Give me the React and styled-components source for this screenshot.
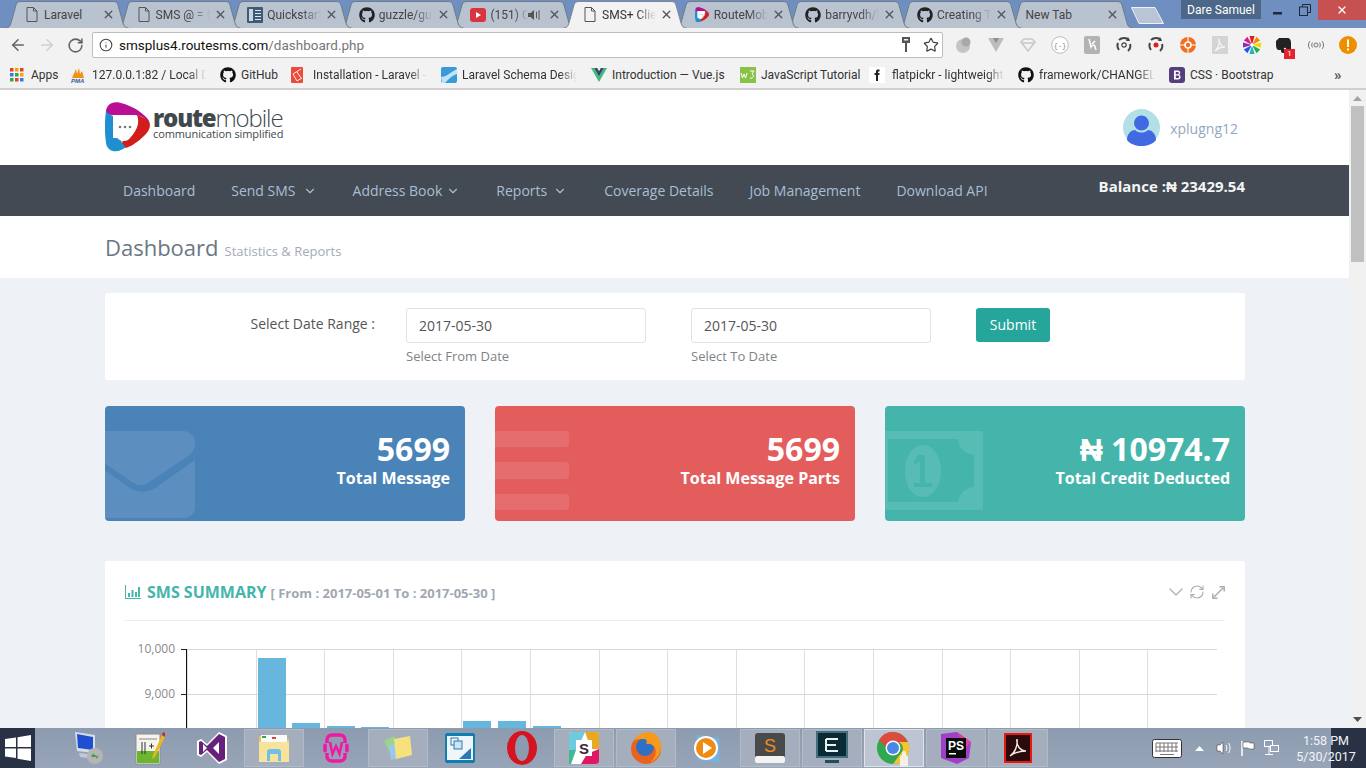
import styled, { createGlobalStyle } from "styled-components";
import { ChevronDown, RefreshCw, ArrowLeft, ArrowRight, RotateCw, Star, Info, X } from "lucide-react";
import { FaGithub } from "react-icons/fa";

const Global = createGlobalStyle`
  html, body { margin: 0; padding: 0; overflow: hidden; background: #eef1f6; }
  * { box-sizing: border-box; }
`;

const Screen = styled.div`
  width: 1366px;
  height: 768px;
  display: flex;
  flex-direction: column;
  overflow: hidden;
  font-family: "Open Sans", sans-serif;
`;

// browser chrome
const Chrome = styled.div`
  height: 90px;
  flex: none;
  display: flex;
  flex-direction: column;
  font-family: Roboto, sans-serif;
  font-size: 12px;
  color: #333;
`;

const TabStrip = styled.div`
  height: 28px;
  flex: none;
  background: #6e8fbf;
  display: flex;
  padding: 1px 0 0 5px;
  position: relative;
`;

const Tab = styled.div`
  position: relative;
  flex: none;
  width: 124px;
  height: 27px;
  margin-right: -12.4px;
  z-index: ${(p) => p.$z};
  & > svg.shape {
    position: absolute;
    inset: 0;
  }
`;

const TabBody = styled.div`
  position: relative;
  height: 100%;
  display: flex;
  align-items: center;
  padding-left: ${(p) => p.$pad}px;
  color: ${(p) => (p.$active ? "#333" : "#444")};
`;

const TabIcon = styled.span`
  width: 16px;
  height: 16px;
  flex: none;
  display: flex;
  align-items: center;
  justify-content: center;
  margin-right: 4px;
`;

const TabTitle = styled.span`
  width: ${(p) => p.$w}px;
  flex: none;
  white-space: nowrap;
  overflow: hidden;
  font-size: 12px;
  -webkit-mask-image: ${(p) => (p.$plain ? "none" : "linear-gradient(to right, #000 65%, transparent)")};
  mask-image: ${(p) => (p.$plain ? "none" : "linear-gradient(to right, #000 65%, transparent)")};
`;

const TabClose = styled.span`
  position: absolute;
  left: 97px;
  top: 7px;
  display: flex;
  color: #55595f;
`;

const NewTab = styled.svg`
  flex: none;
  margin: 6px 0 0 10px;
`;

const WindowButtons = styled.div`
  position: absolute;
  top: 0;
  right: 0;
  display: flex;
  align-items: flex-start;
`;

const UserBadge = styled.div`
  width: 80px;
  height: 19px;
  background: #4d6788;
  color: #fff;
  font-size: 12px;
  display: flex;
  align-items: center;
  justify-content: center;
  margin-right: 3px;
`;

const WinButton = styled.div`
  width: ${(p) => p.$w}px;
  height: 20px;
  display: flex;
  align-items: center;
  justify-content: center;
  background: ${(p) => p.$bg || "transparent"};
`;

const Toolbar = styled.div`
  height: 34px;
  flex: none;
  background: #f2f2f2;
  display: flex;
  align-items: center;
  padding-left: 3px;
`;

const NavIcon = styled.span`
  width: 29px;
  display: flex;
  justify-content: center;
  color: ${(p) => p.$c};
`;

const AddressBar = styled.div`
  width: 851px;
  height: 26px;
  margin-left: 2px;
  background: #fff;
  border: 1px solid #bdbdbd;
  border-radius: 2px;
  display: flex;
  align-items: center;
  padding: 0 3px 0 6px;
  font-size: 13.5px;
  flex: none;
`;

const Url = styled.span`
  margin-left: 6px;
  flex: 1;
  color: #111;
  & em {
    font-style: normal;
    color: #777;
  }
`;

const StarIcon = styled(Star)`
  margin-left: 12px;
`;

const Extensions = styled.div`
  display: flex;
  margin-left: 5px;
`;

const Ext = styled.span`
  width: 32px;
  height: 18px;
  display: flex;
  align-items: center;
  justify-content: center;
  position: relative;
`;

const ExtBadge = styled.span`
  position: absolute;
  right: 5px;
  bottom: -5px;
  width: 11px;
  height: 10px;
  background: #e8202a;
  color: #fff;
  font-size: 8px;
  line-height: 10px;
  text-align: center;
`;

const Bookmarks = styled.div`
  height: 28px;
  flex: none;
  background: #f2f2f2;
  border-bottom: 2px solid #d0d0d0;
  display: flex;
  align-items: center;
  padding: 0 0 0 10px;
  position: relative;
`;

const Bookmark = styled.div`
  width: ${(p) => p.$w}px;
  flex: none;
  display: flex;
  align-items: center;
  gap: ${(p) => p.$gap || 5}px;
  padding-right: ${(p) => (p.$fade ? 14 : 0)}px;
  white-space: nowrap;
  & > svg {
    flex: none;
  }
`;

const BookmarkLabel = styled.span`
  overflow: hidden;
  flex: 1;
  -webkit-mask-image: ${(p) => (p.$fade ? "linear-gradient(to right, #000 85%, transparent)" : "none")};
  mask-image: ${(p) => (p.$fade ? "linear-gradient(to right, #000 85%, transparent)" : "none")};
`;

const More = styled.span`
  position: absolute;
  left: 1334px;
  top: 4px;
  font-size: 15px;
  font-weight: 700;
  color: #555;
`;

// page
const Viewport = styled.div`
  flex: 1;
  min-height: 0;
  display: flex;
`;

const Page = styled.div`
  flex: 1;
  min-width: 0;
  background: #eef1f6;
  overflow: hidden;
`;

const Scrollbar = styled.div`
  width: 17px;
  flex: none;
  background: #f1f1f1;
  display: flex;
  flex-direction: column;
  align-items: center;
`;

const ScrollArrow = styled.svg`
  flex: none;
  margin: 6px 0;
`;

const ScrollThumb = styled.div`
  width: 13px;
  height: 156px;
  margin-top: -1px;
  background: #c1c1c1;
`;

const ScrollTrack = styled.div`
  flex: 1;
`;

const Wrap = styled.div`
  width: 1140px;
  margin-left: 105px;
`;

const Header = styled.div`
  height: 75px;
  background: #fff;
`;

const HeaderRow = styled(Wrap)`
  height: 100%;
  display: flex;
  align-items: center;
  justify-content: space-between;
  padding-right: 7px;
`;

const Brand = styled.div`
  display: flex;
  align-items: center;
  gap: 3px;
  margin-top: -1px;
`;

const BrandText = styled.div`
  display: flex;
  flex-direction: column;
  color: #40484c;
  margin-top: -6px;
`;

const BrandName = styled.div`
  font-size: 24px;
  line-height: 19px;
  font-weight: 300;
  letter-spacing: -1.1px;
  & b {
    font-weight: 800;
    letter-spacing: -1.2px;
  }
`;

const BrandTag = styled.div`
  font-size: 11px;
  line-height: 13px;
  letter-spacing: -0.1px;
  white-space: nowrap;
`;

const User = styled.div`
  display: flex;
  align-items: center;
  gap: 10px;
  font-size: 14px;
  color: #93a8c2;
  & span {
    margin-top: 2px;
  }
`;

const NavBar = styled.div`
  height: 51px;
  background: #434a54;
`;

const NavRow = styled(Wrap)`
  height: 100%;
  display: flex;
  align-items: center;
  justify-content: space-between;
`;

const NavList = styled.div`
  display: flex;
  align-items: center;
  gap: 36px;
  padding-left: 18px;
`;

const NavItem = styled.div`
  display: flex;
  align-items: center;
  gap: ${(p) => p.$gap || 0}px;
  font-size: 14px;
  color: #a9bed3;
  white-space: nowrap;
  & svg {
    margin-right: ${(p) => p.$after || 0}px;
  }
`;

const Balance = styled.div`
  font-size: 15px;
  font-weight: 700;
  color: #f2f4f6;
  margin-top: -9px;
  white-space: nowrap;
`;

const TitleBar = styled.div`
  height: 62px;
  background: #fff;
`;

const TitleRow = styled(Wrap)`
  height: 100%;
  display: flex;
  align-items: baseline;
  gap: 6px;
  padding-top: 16px;
`;

const PageTitle = styled.div`
  font-size: 22px;
  color: #6b7785;
`;

const PageSub = styled.div`
  font-size: 13px;
  color: #a3abb5;
`;

const Content = styled(Wrap)`
  padding-top: 15px;
`;

const DateCard = styled.div`
  height: 87px;
  background: #fff;
  border-radius: 3px;
  display: flex;
  align-items: flex-start;
  padding-top: 15px;
`;

const DateLabel = styled.div`
  width: 270px;
  margin-right: 31px;
  text-align: right;
  font-size: 14px;
  color: #555;
  padding-top: 6px;
`;

const Field = styled.div`
  width: 240px;
  margin-right: 45px;
`;

const DateInput = styled.div`
  height: 35px;
  border: 1px solid #dfe3e8;
  border-radius: 3px;
  padding: 0 12px;
  display: flex;
  align-items: center;
  font-size: 14px;
  color: #555;
`;

const Hint = styled.div`
  margin-top: 4px;
  font-size: 13px;
  color: #7d8388;
`;

const Submit = styled.div`
  width: 74px;
  height: 34px;
  background: #26a69a;
  border-radius: 3px;
  color: #fff;
  font-size: 14px;
  font-weight: 500;
  padding-bottom: 2px;
  display: flex;
  align-items: center;
  justify-content: center;
`;

const Stats = styled.div`
  display: grid;
  grid-template-columns: repeat(3, 360px);
  gap: 30px;
  margin-top: 26px;
`;

const StatCard = styled.div`
  position: relative;
  height: 115px;
  border-radius: 4px;
  overflow: hidden;
  background: ${(p) => p.$bg};
  color: #fff;
  text-align: right;
  padding: 23px 15px 0 0;
  & > svg {
    position: absolute;
    left: 0;
    top: 25px;
  }
`;

const StatValue = styled.div`
  font-size: 32px;
  line-height: 40px;
  font-weight: 700;
  position: relative;
`;

const StatLabel = styled.div`
  font-size: 16px;
  line-height: 22px;
  font-weight: 700;
  position: relative;
  margin-top: -2px;
`;

const ChartCard = styled.div`
  margin-top: 40px;
  background: #fff;
  border-radius: 3px;
  padding: 0 20px;
  height: 400px;
`;

const ChartHead = styled.div`
  height: 60px;
  border-bottom: 1px solid #eeeeee;
  display: flex;
  align-items: center;
  padding-top: 2px;
`;

const ChartTitle = styled.div`
  display: flex;
  align-items: baseline;
  margin-left: 6px;
  font-size: 16px;
  font-weight: 700;
  color: #45b5ab;
  flex: 1;
  & small {
    font-size: 13px;
    color: #a0a8b2;
    margin-left: 4px;
  }
`;

const ChartTools = styled.div`
  display: flex;
  align-items: center;
  gap: 1px;
  color: #aeaeae;
  margin-top: 1px;
`;

const ExpandIcon = styled.svg`
  margin-left: 6px;
`;

const ChartSvg = styled.svg`
  display: block;
  margin: 27px 0 0 -20px;
  overflow: visible;
`;

// windows taskbar
const Taskbar = styled.div`
  height: 40px;
  flex: none;
  display: flex;
  background: linear-gradient(#8d9bb0, #98a5b8);
  position: relative;
  font-family: Roboto, sans-serif;
`;

const StartButton = styled.div`
  width: 35px;
  margin-right: 23px;
  background: #283244;
  display: flex;
  align-items: center;
  justify-content: center;
  flex: none;
`;

const TaskList = styled.div`
  display: flex;
  gap: 2px;
  padding-top: 1px;
`;

const TaskItem = styled.div`
  width: 60px;
  height: 38px;
  display: flex;
  align-items: center;
  justify-content: center;
  border: 1px solid ${(p) => (p.$active ? "#dfe4ea" : p.$open ? "#b2bbc8" : "transparent")};
  background: ${(p) => (p.$active ? "#bcc5d1" : p.$open ? "#a4aebd" : "transparent")};
`;

const Tray = styled.div`
  margin-left: auto;
  display: flex;
  align-items: center;
  color: #fff;
`;

const TrayIcon = styled.span`
  display: flex;
  width: ${(p) => p.$w}px;
  justify-content: center;
`;

const Clock = styled.div`
  width: 80px;
  height: 100%;
  margin-left: 6px;
  padding-top: 2px;
  background: linear-gradient(to right, transparent 45px, #283244 45px);
  font-size: 12.5px;
  line-height: 16px;
  text-align: center;
  display: flex;
  flex-direction: column;
  justify-content: center;
  color: #f2f4f7;
`;

/* icons */
const Doc = () => (
  <svg width="12" height="15" viewBox="0 0 12 15" fill="none" stroke="#555" strokeWidth="1">
    <path d="M1 .5h6.500L11 4v10.500H1zM7.500 .5V4H11" />
  </svg>
);
const Book = () => (
  <svg width="16" height="16" viewBox="0 0 16 16">
    <rect width="16" height="16" rx="1" fill="#3f5a73" />
    <rect x="2" y="2" width="4" height="12" fill="#c9d4de" />
    <path d="M8 3h6v1H8zM8 6h6v1H8zM8 9h6v1H8zM8 12h6v1H8z" fill="#dfe6ec" />
  </svg>
);
const Yt = () => (
  <svg width="16" height="14" viewBox="0 0 16 14">
    <rect width="16" height="14" y="0" rx="3" fill="#d9343f" />
    <path d="M6 4l5 3-5 3z" fill="#fff" />
  </svg>
);
const Speaker = () => (
  <svg width="13" height="12" viewBox="0 0 13 12" fill="#555">
    <path d="M0 4h2.500L6 1v10L2.500 8H0zM8 3l1-.5v7L8 9zM10.500 1.500l1-.5v10l-1-.5z" />
  </svg>
);
const LogoMark = ({ size = 45 }) => (
  <svg width={size} height={size * 1.11} viewBox="0 0 45 50">
    <path d="M1 12C0 4 6-1 14 .5 24 2.500 36 9 42 16c2 2 3 5 3 7-3-6-9-10-16-10H10C6 13 3 13 1 12z" fill="#b80f95" />
    <path d="M1 9C-.5 19-.5 31 1 41c1 8 9 10 15 7 4-2 8-4 11-7-4 1-8 0-11-2l-4-3H8V14c-2-1-5-2-7-5z" fill="#1f8fcf" />
    <path d="M45 23c0 4-2 7-6 11-5 5-12 10-18 12l-6-8c4 2 8 1 10-2 4-4 7-9 8-14 .5-3 0-6-1-9 6 2 12 5 13 10z" fill="#d21d1b" />
    <path d="M12 13h16c3 0 5 2 4 6l-5 10-8 7-2 5-2-5h-2c-3 0-5-2-5-5V18c0-3 1-5 4-5z" fill="#fff" />
    <circle cx="15" cy="25" r="1.300" fill="#777" />
    <circle cx="20" cy="25" r="1.300" fill="#777" />
    <circle cx="25" cy="25" r="1.300" fill="#777" />
  </svg>
);
const Apps = () => (
  <svg width="14" height="14" viewBox="0 0 14 14">
    {["#e0452c", "#f2a500", "#e0452c", "#3b78e7", "#2fa84f", "#f2a500", "#2fa84f", "#e0452c", "#3b78e7"].map((c, i) => (
      <rect key={i} x={(i % 3) * 5} y={Math.floor(i / 3) * 5} width="3.500" height="3.500" fill={c} />
    ))}
  </svg>
);
const Pma = () => (
  <svg width="16" height="16" viewBox="0 0 16 16">
    <path d="M2 11L6 2l1 5 2-6 1 6 2-3 2 7z" fill="#f29111" />
    <text x="1" y="15.500" fontSize="6" fontStyle="italic" fontWeight="700" fontFamily="Liberation Sans" fill="#3b5b93">PMA</text>
  </svg>
);
const LaravelMark = () => (
  <svg width="12" height="16" viewBox="0 0 12 16">
    <rect width="12" height="16" rx="1" fill="#ee4a3b" />
    <path d="M2 7l8-5M2 7l4 7M6 14l5-3M6 5l4 6" stroke="#fff" strokeWidth=".9" fill="none" />
  </svg>
);
const SchemaMark = () => (
  <svg width="16" height="16" viewBox="0 0 16 16">
    <rect width="16" height="16" rx="2" fill="#3a9ad9" />
    <path d="M0 10c5 0 7-3 16-8v5c-6 2-8 5-12 9H1z" fill="#bfe3f7" />
  </svg>
);
const Vue = ({ c1 = "#41b883", c2 = "#35495e" }) => (
  <svg width="16" height="14" viewBox="0 0 16 14">
    <path d="M0 0h3.200L8 8.500 12.800 0H16L8 14z" fill={c1} />
    <path d="M3.200 0h3L8 3.200 9.800 0h3L8 8.500z" fill={c2} />
  </svg>
);
const W3 = () => (
  <svg width="16" height="16" viewBox="0 0 16 16">
    <rect width="16" height="16" fill="#8ac249" />
    <path d="M1 6l1.500 5L4 7l1.500 4L7 6M10 4h4l-2 3c2 0 2 5-2 4" stroke="#fff" strokeWidth="1" fill="none" />
  </svg>
);
const Fb = () => (
  <svg width="16" height="16" viewBox="0 0 16 16">
    <rect width="16" height="16" fill="#fff" />
    <path d="M7 14V8H5.500V6H7V4.500C7 3 8 2.500 9 2.500h1.500v2H9.500c-.5 0-.5.3-.5.6V6h1.500l-.2 2H9v6z" fill="#222" />
  </svg>
);
const Bs = () => (
  <svg width="16" height="16" viewBox="0 0 16 16">
    <rect width="16" height="16" rx="3" fill="#563d7c" />
    <path d="M5 3.500h4c2.500 0 3 3.500 1 4.200 2.500.7 2 4.800-1 4.800H5zM6.800 5v2.200h2c1.400 0 1.400-2.200 0-2.200zM6.800 8.600V11h2.300c1.500 0 1.500-2.400 0-2.400z" fill="#fff" fillRule="evenodd" />
  </svg>
);
const Key = () => (
  <svg width="10" height="16" viewBox="0 0 10 16" fill="#555">
    <path d="M1 0h8v6H6v9H4V6H1z" />
    <rect x="3" y="2" width="4" height="1.500" fill="#f2f2f2" />
  </svg>
);

const G = "#b3b3b3";
const extIcons = [
  <svg width="18" height="18" viewBox="0 0 18 18"><circle cx="8" cy="10" r="7" fill="#c4c4c4" /><circle cx="11" cy="6" r="4.500" fill="#a9a9a9" /></svg>,
  <svg width="16" height="16" viewBox="0 0 16 16"><path d="M0 1h16L8 15z" fill="#bdbdbd" /><path d="M5 1h6L8 6z" fill="#8e8e8e" /></svg>,
  <svg width="16" height="14" viewBox="0 0 16 14" fill="none" stroke="#c8c8c8" strokeWidth="1.500"><path d="M1 4l3-3h8l3 3-7 9zM2 5h12" /></svg>,
  <svg width="18" height="18" viewBox="0 0 18 18"><circle cx="9" cy="9" r="8.300" fill="#fff" stroke="#bbb" /><text x="9" y="12" fontSize="7" textAnchor="middle" fill="#888" fontFamily="Liberation Mono">{"{-}"}</text></svg>,
  <svg width="16" height="18" viewBox="0 0 16 18"><rect width="16" height="18" rx="2" fill={G} /><path d="M5 3l2 8c1-2 4-3 4 0l1 3M8 8l3-3" stroke="#fff" strokeWidth="1.500" fill="none" /></svg>,
  <svg width="16" height="18" viewBox="0 0 16 18" fill="none" stroke="#444" strokeWidth="2"><path d="M3 4a7 7 0 0 1 10 0M14 8a6.500 6.500 0 0 1-2 7M3 14A7 7 0 0 1 2 7" /><circle cx="8" cy="9" r="2.200" strokeWidth="1.200" /><path d="M12 1l2 4-4 0z" fill="#444" stroke="none" /></svg>,
  <svg width="16" height="18" viewBox="0 0 16 18" fill="none" stroke="#444" strokeWidth="2"><path d="M3 4a7 7 0 0 1 10 0M14 8a6.500 6.500 0 0 1-2 7M3 14A7 7 0 0 1 2 7" /><circle cx="8" cy="9" r="2.500" fill="#e01b24" stroke="none" /><path d="M12 1l2 4-4 0z" fill="#444" stroke="none" /></svg>,
  <svg width="16" height="16" viewBox="0 0 16 16"><circle cx="8" cy="8" r="8" fill="#f0701f" /><circle cx="8" cy="8" r="3" fill="none" stroke="#fff" strokeWidth="1.500" /><path d="M8 0v5M8 11v5M0 8h5M11 8h5" stroke="#fff" strokeWidth="1" /></svg>,
  <svg width="16" height="18" viewBox="0 0 16 18"><rect width="16" height="18" fill="#d4d4d4" /><path d="M3 15c3-2 5-8 4-12 0 5 3 8 6 8-4 0-7 1-10 4z" fill="none" stroke="#f5f5f5" strokeWidth="1.300" /></svg>,
  <svg width="18" height="18" viewBox="0 0 18 18">
    {["#e01b24", "#f08a00", "#f5d800", "#2fa84f", "#19b5c9", "#2457d6", "#8a2bc2", "#d81b8a"].map((c, i) => (
      <path key={i} d="M9 9L6.500 0h5z" fill={c} transform={`rotate(${i * 45} 9 9)`} />
    ))}
    <circle cx="9" cy="9" r="1.800" fill="#fff" />
  </svg>,
  <svg width="16" height="17" viewBox="0 0 16 17"><path d="M3 1h8c3 0 4 2 4 5v6c0 3-2 4-5 4H7c-2 0-2-2-2-3H3C1 13 0 11 0 8V4z" fill="#222" /><circle cx="9" cy="12" r="1.200" fill="#f2f2f2" /></svg>,
  <svg width="18" height="10" viewBox="0 0 18 10" fill="none" stroke="#666" strokeWidth=".9"><path d="M3 1C1 3 1 7 3 9M5.500 2.500c-1 1-1 4 0 5M15 1c2 2 2 6 0 8M12.500 2.500c1 1 1 4 0 5" /><circle cx="9" cy="5" r="2" /></svg>,
  <svg width="18" height="18" viewBox="0 0 18 18"><circle cx="9" cy="9" r="9" fill="#ee8f00" /><rect x="8" y="3.500" width="2" height="7.500" fill="#fff" /><rect x="8" y="12.500" width="2" height="2" fill="#fff" /></svg>,
];

const Windows = () => (
  <svg width="26" height="26" viewBox="0 0 26 26" fill="#fff">
    <path d="M0 4l11-1.500V12H0zM12.500 2.300L26 0v12H12.500zM0 13.500h11V23L0 21.500zM12.500 13.500H26V26l-13.500-2.200z" />
  </svg>
);

const taskIcons = [
  <svg width="32" height="34" viewBox="0 0 32 34"><path d="M3 1l20 3v18L5 20z" fill="#d8dee6" /><path d="M5 3l16 3v13L6 17z" fill="#1d4fd0" /><path d="M7 22l9 1v4l-8-1z" fill="#c3c9d2" /><circle cx="23" cy="25" r="8" fill="#b5b5b5" /><path d="M19 25l3-3v2h3l-2 2h-3zM27 25l-3 3v-2h-3" fill="#3aa34a" /></svg>,
  <svg width="32" height="34" viewBox="0 0 32 34"><rect x="2" y="3" width="24" height="30" fill="#f4f4ec" stroke="#8d8d8d" /><rect x="3" y="20" width="22" height="12" fill="#6cb52d" /><path d="M5 8h18" stroke="#888" /><path d="M8 11v12M11 11v12M15 15h5M17.500 12.500v5" stroke="#333" fill="none" /><path d="M19 24L28 4l3 2-10 20-3 2z" fill="#eeb422" /><path d="M28 4l1-3 2 1v4z" fill="#b43322" /></svg>,
  <svg width="32" height="34" viewBox="0 0 32 34"><path d="M23 1l8 4v24l-8 4L11 21l-6 5-4-2V10l4-2 6 5z" fill="#fff" /><path d="M23 3l6 3v22l-6 3-12-12-6 5-2-1V11l2-1 6 5zM7 13v8l4-4zM23 11l-6 6 6 6z" fill="#68217a" fillRule="evenodd" /></svg>,
  <svg width="32" height="30" viewBox="0 0 32 30"><path d="M1 3h12l2 3h16v22H1z" fill="#e9c765" /><rect x="3" y="2" width="26" height="10" fill="#fafafa" /><rect x="4" y="3" width="4" height="2" fill="#3aa34a" /><rect x="14" y="4" width="4" height="2" fill="#d8433a" /><path d="M1 9h30v20H1z" fill="#f7e39a" /><path d="M9 28v-9c0-2 1-3 3-3h8c2 0 3 1 3 3v9h-3v-7h-8v7z" fill="#6fbfe6" /></svg>,
  <svg width="28" height="30" viewBox="0 0 28 30" fill="none" stroke="#f218a6" strokeWidth="3.500"><path d="M5 10V7c0-3 2-5 5-5h8c3 0 5 2 5 5v3M5 20v3c0 3 2 5 5 5h8c3 0 5-2 5-5v-3" /><rect x="1.800" y="11" width="2.500" height="8" rx="1" fill="#f218a6" strokeWidth="1" /><rect x="23.700" y="11" width="2.500" height="8" rx="1" fill="#f218a6" strokeWidth="1" /><path d="M8 9l2.500 12L14 13l3.500 8L20 9" strokeWidth="2.500" /></svg>,
  <svg width="32" height="30" viewBox="0 0 32 30"><path d="M2 8l10-5 6 14-9 5z" fill="#9bd48a" /><path d="M7 12l7-2v16l-5 1z" fill="#98c8ef" /><path d="M12 6l16-3 2 19-16 4z" fill="#f6e27d" /></svg>,
  <svg width="32" height="32" viewBox="0 0 32 32"><rect x="1" y="1" width="30" height="30" rx="2" fill="#0f7fb0" /><rect x="3" y="4" width="26" height="24" fill="#eef6fa" /><rect x="7" y="6" width="7" height="7" fill="none" stroke="#2a78b5" /><rect x="10" y="9" width="8" height="8" fill="#cfe4f1" stroke="#2a78b5" /><path d="M15 27l12-11v11z" fill="#2a78b5" /></svg>,
  <svg width="30" height="34" viewBox="0 0 30 34"><ellipse cx="15" cy="17" rx="15" ry="17" fill="#d6131f" /><ellipse cx="15" cy="17" rx="7" ry="13" fill="#8d9bb0" /></svg>,
  <svg width="30" height="32" viewBox="0 0 30 32"><rect width="30" height="32" rx="3" fill="#fff" /><path d="M0 3C0 1 1 0 3 0h13L8 18H0z" fill="#6ecadc" /><path d="M16 0h12c1 0 2 1 2 3v14l-8 0z" fill="#e9a820" /><path d="M30 17v12c0 2-1 3-3 3H12l6-10z" fill="#e01765" /><path d="M0 18h7l-5 14H0z" fill="#3eb991" /><rect x="7" y="8" width="16" height="16" fill="#fff" /><text x="15" y="21.500" textAnchor="middle" fontSize="15" fontWeight="700" fontFamily="Liberation Sans" fill="#3b2b3a">S</text></svg>,
  <svg width="32" height="34" viewBox="0 0 32 34"><circle cx="16" cy="18" r="15" fill="#e8631e" /><circle cx="15" cy="16" r="9" fill="#2f6fc4" /><path d="M4 10c3-6 8-9 16-9 5 1 9 5 11 11 1 8-3 17-12 20 6-4 8-10 6-15-2-4-6-5-9-4 2-4 0-5-3-5-3 0-7 0-9 2z" fill="#f59a1e" /></svg>,
  <svg width="30" height="32" viewBox="0 0 30 32"><path d="M4 3l22 3v24L4 28z" fill="#6fb5e6" /><circle cx="13" cy="16" r="12" fill="#fff" /><circle cx="13" cy="16" r="10" fill="#f08a12" /><path d="M10 10l9 6-9 6z" fill="#fff" /></svg>,
  <svg width="32" height="32" viewBox="0 0 32 32"><rect x="1" y="1" width="30" height="28" rx="3" fill="#4a4a4a" /><rect x="1" y="24" width="30" height="7" rx="2" fill="#f3f3f3" /><text x="16" y="20" textAnchor="middle" fontSize="18" fontFamily="Liberation Sans" fill="#f08a24">S</text></svg>,
  <svg width="32" height="34" viewBox="0 0 32 34"><rect x="1" y="1" width="30" height="25" fill="#0c2a33" stroke="#3f6f7d" strokeWidth="2" /><path d="M10 8h12M10 14h10M10 20h12M10 8v12" stroke="#e8f2f4" strokeWidth="2" fill="none" /><rect x="9" y="29" width="14" height="3" fill="#1f4f5c" /></svg>,
  <svg width="36" height="38" viewBox="0 0 36 38">
    <circle cx="17" cy="19" r="16" fill="#2fa84f" />
    <path d="M3 11A16 16 0 0 1 32 14H17a6 6 0 0 0-6 5z" fill="#dd4b3e" />
    <path d="M32 13a16 16 0 0 1-15 22l8-11a7 7 0 0 0-2-11z" fill="#f7c52b" />
    <circle cx="17" cy="19" r="7.500" fill="#fff" />
    <circle cx="17" cy="19" r="6" fill="#4a86e8" />
    <path d="M24 37v-8c0-2 1-3 2-3 0-2 0-4 2-4s2 2 2 4c1 0 2 1 2 3v8z" fill="#f5f0e4" />
  </svg>,
  <svg width="32" height="32" viewBox="0 0 32 32"><path d="M1 2l16-2 14 10-2 16-12 6L1 26z" fill="#a03fc7" /><path d="M17 0l14 10-6 6z" fill="#e23ea5" /><rect x="6" y="6" width="20" height="20" fill="#0a0a0a" /><text x="16" y="18" textAnchor="middle" fontSize="12" fontWeight="700" fontFamily="Liberation Sans" fill="#fff">PS</text><rect x="9" y="21" width="7" height="1.500" fill="#fff" /></svg>,
  <svg width="28" height="30" viewBox="0 0 28 30"><rect x="1" y="1" width="26" height="28" fill="#2a0a0a" stroke="#e81a10" strokeWidth="2" /><path d="M6 23c5-3 8-11 7-17-1 6 3 12 9 12-6 0-11 1-16 5z" fill="none" stroke="#f4e9e4" strokeWidth="1.400" /></svg>,
];

const MoneyIcon = () => (
  <svg width="98" height="80" viewBox="0 0 98 80" fill="#fff" fillOpacity=".1">
    <path
      fillRule="evenodd"
      d="M-2 0H96a2 2 0 0 1 2 2v75a2 2 0 0 1-2 2H-2zM3 8v63h70c1-8 7-14 16-15V24c-9-1-15-7-16-16zM38 14c10 0 18 11 18 26s-8 26-18 26-18-11-18-26 8-26 18-26zM33 24l-5 8 3 1 4-3v22h-6v4h18v-4h-7V24z"
    />
  </svg>
);

const tabs = [
  { title: "Laravel", icon: <Doc />, plain: true },
  { title: "SMS @ = Mail", icon: <Doc /> },
  { title: "Quickstart", icon: <Book /> },
  { title: "guzzle/guzzle", icon: <FaGithub size={16} color="#222" /> },
  { title: "(151) Cool", icon: <Yt />, w: 38, audio: true },
  { title: "SMS+ Client", icon: <Doc />, active: true },
  { title: "RouteMobile", icon: <LogoMark size={14} /> },
  { title: "barryvdh/lar", icon: <FaGithub size={16} color="#222" /> },
  { title: "Creating Tabs", icon: <FaGithub size={16} color="#222" /> },
  { title: "New Tab", icon: null, plain: true },
];

const marks = [
  { icon: <Apps />, label: "Apps", w: 60, gap: 7 },
  { icon: <Pma />, label: "127.0.0.1:82 / Local Databases", w: 150, fade: true, gap: 6 },
  { icon: <FaGithub size={16} color="#111" />, label: "GitHub", w: 71 },
  { icon: <LaravelMark />, label: "Installation - Laravel - The PHP", w: 150, fade: true, gap: 10 },
  { icon: <SchemaMark />, label: "Laravel Schema Designer", w: 150, fade: true },
  { icon: <Vue />, label: "Introduction — Vue.js", w: 149 },
  { icon: <W3 />, label: "JavaScript Tutorial", w: 129 },
  { icon: <Fb />, label: "flatpickr - lightweight datepicker", w: 149, fade: true, gap: 7 },
  { icon: <FaGithub size={16} color="#111" />, label: "framework/CHANGELOG.md", w: 151, fade: true },
  { icon: <Bs />, label: "CSS · Bootstrap", w: 120 },
];

const taskState = [0, 0, 0, "open", 0, "open", 0, 0, "open", "open", 0, "open", "open", "active", "open", "open"];

const navItems = [
  { label: "Dashboard" },
  { label: "Send SMS", drop: true, gap: 7 },
  { label: "Address Book", drop: true, gap: 4 },
  { label: "Reports", drop: true, gap: 6, after: 1 },
  { label: "Coverage Details" },
  { label: "Job Management" },
  { label: "Download API" },
];

const bars = [
  [258, 658],
  [292, 723],
  [327, 726],
  [361, 727],
  [463, 721],
  [498, 721],
  [533, 726],
];

function TabShape({ active }) {
  return (
    <svg className="shape" width="124" height="27" viewBox="0 0 124 27">
      <path
        d="M.5 27C4 27 5 25 6 22L11 4C12 1.500 13 .5 16 .5H108C111 .5 112 1.500 113 4L118 22C119 25 120 27 123.500 27"
        fill={active ? "#f2f2f2" : "#b9c2cf"}
        stroke={active ? "#7d8793" : "#6f7b8a"}
      />
    </svg>
  );
}

function BarChart() {
  // the viewBox keeps page coordinates so the numbers read like the screenshot
  const xs = Array.from({ length: 15 }, (_, i) => 187 + i * 68.6);
  return (
    <ChartSvg width="1140" height="120" viewBox="105 648 1140 120">
      {xs.map((x, i) => (
        <line key={i} x1={Math.round(x) + 0.5} x2={Math.round(x) + 0.5} y1="649" y2="768" stroke="#dedede" />
      ))}
      <line x1="181" x2="1217" y1="649.500" y2="649.500" stroke="#d8d8d8" />
      <line x1="181" x2="1217" y1="694.500" y2="694.500" stroke="#d8d8d8" />
      <line x1="181" x2="187" y1="649.500" y2="649.500" stroke="#222" />
      <line x1="181" x2="187" y1="694.500" y2="694.500" stroke="#222" />
      <line x1="186.500" x2="186.500" y1="649" y2="768" stroke="#111" />
      {bars.map(([x, y]) => (
        <rect key={x} x={x} y={y} width="28" height={768 - y} fill="#67b6dd" />
      ))}
      <text x="175" y="653" textAnchor="end" fontSize="12" fill="#8a8a8a" fontFamily="Open Sans">10,000</text>
      <text x="175" y="698" textAnchor="end" fontSize="12" fill="#8a8a8a" fontFamily="Open Sans">9,000</text>
    </ChartSvg>
  );
}

export default function App() {
  return (
    <Screen>
      <Global />
      <Chrome>
        <TabStrip>
          {tabs.map((t, i) => (
            <Tab key={t.title} $z={t.active ? 30 : 20 - i}>
              <TabShape active={t.active} />
              <TabBody $active={t.active} $pad={t.icon ? 19 : 16}>
                {t.icon && <TabIcon>{t.icon}</TabIcon>}
                <TabTitle $w={t.w || 54} $plain={t.plain}>{t.title}</TabTitle>
                {t.audio && <Speaker />}
                <TabClose>
                  <X size={13} strokeWidth={2.6} />
                </TabClose>
              </TabBody>
            </Tab>
          ))}
          <NewTab width="33" height="17" viewBox="0 0 33 17">
            <path d="M.5.5H24L32.500 16.500H8z" fill="#b9c4d6" stroke="#eef1f5" />
          </NewTab>
          <WindowButtons>
            <UserBadge>Dare Samuel</UserBadge>
            <WinButton $w={28}>
              <svg width="10" height="10"><rect y="7" width="9" height="2.500" fill="#1f2937" /></svg>
            </WinButton>
            <WinButton $w={26}>
              <svg width="12" height="12" viewBox="0 0 12 12" fill="none" stroke="#1f2937"><path d="M3.500 3V.5h8v8H9" /><rect x=".5" y="3" width="8" height="8.500" /></svg>
            </WinButton>
            <WinButton $w={48} $bg="#c75050">
              <X size={12} color="#fff" strokeWidth={2.5} />
            </WinButton>
          </WindowButtons>
        </TabStrip>
        <Toolbar>
          <NavIcon $c="#5f6368"><ArrowLeft size={18} strokeWidth={2} /></NavIcon>
          <NavIcon $c="#cfcfcf"><ArrowRight size={18} strokeWidth={2} /></NavIcon>
          <NavIcon $c="#5f6368"><RotateCw size={17} strokeWidth={2.2} /></NavIcon>
          <AddressBar>
            <Info size={14} color="#444" strokeWidth={1.8} />
            <Url>smsplus4.routesms.com<em>/dashboard.php</em></Url>
            <Key />
            <StarIcon size={16} color="#444" strokeWidth={1.8} />
          </AddressBar>
          <Extensions>
            {extIcons.map((icon, i) => (
              <Ext key={i}>
                {icon}
                {i === 10 && <ExtBadge>1</ExtBadge>}
              </Ext>
            ))}
          </Extensions>
        </Toolbar>
        <Bookmarks>
          {marks.map((m) => (
            <Bookmark key={m.label} $w={m.w} $fade={m.fade} $gap={m.gap}>
              {m.icon}
              <BookmarkLabel $fade={m.fade}>{m.label}</BookmarkLabel>
            </Bookmark>
          ))}
          <More>»</More>
        </Bookmarks>
      </Chrome>

      <Viewport>
        <Page>
          <Header>
            <HeaderRow>
              <Brand>
                <LogoMark />
                <BrandText>
                  <BrandName><b>route</b>mobile</BrandName>
                  <BrandTag>communication simplified</BrandTag>
                </BrandText>
              </Brand>
              <User>
                <svg width="37" height="37" viewBox="0 0 37 37">
                  <circle cx="18.500" cy="18.500" r="18.500" fill="#b2e0e6" />
                  <circle cx="18.500" cy="14" r="7.500" fill="#4169e1" />
                  <path d="M4 31c0-7 5-10 8-10 2 2 4 2.500 6.500 2.500S23 23 25 21c3 0 8 3 8 10-3 4-9 6-14.500 6S7 35 4 31z" fill="#4169e1" />
                </svg>
                <span>xplugng12</span>
              </User>
            </HeaderRow>
          </Header>
          <NavBar>
            <NavRow>
              <NavList>
                {navItems.map((n) => (
                  <NavItem key={n.label} $gap={n.gap} $after={n.after}>
                    {n.label}
                    {n.drop && <ChevronDown size={14} strokeWidth={2} />}
                  </NavItem>
                ))}
              </NavList>
              <Balance>Balance :₦ 23429.54</Balance>
            </NavRow>
          </NavBar>
          <TitleBar>
            <TitleRow>
              <PageTitle>Dashboard</PageTitle>
              <PageSub>Statistics &amp; Reports</PageSub>
            </TitleRow>
          </TitleBar>
          <Content>
            <DateCard>
              <DateLabel>Select Date Range :</DateLabel>
              <Field>
                <DateInput>2017-05-30</DateInput>
                <Hint>Select From Date</Hint>
              </Field>
              <Field>
                <DateInput>2017-05-30</DateInput>
                <Hint>Select To Date</Hint>
              </Field>
              <Submit>Submit</Submit>
            </DateCard>
            <Stats>
              <StatCard $bg="#4a83b8">
                <svg width="90" height="88" viewBox="0 0 90 88" fill="#fff" fillOpacity=".1">
                  <path d="M-2 0H78C85 0 90 5 90 12 90 20 85 24 80 27L46 50C40 55 33 55 27 51L-2 31zM-2 38L25 57C33 62 42 62 50 57L90 29V76C90 83 85 87 78 87H-2z" />
                </svg>
                <StatValue>5699</StatValue>
                <StatLabel>Total Message</StatLabel>
              </StatCard>
              <StatCard $bg="#e35d5d">
                <svg width="74" height="80" viewBox="0 0 74 80" fill="#fff" fillOpacity=".1">
                  <path d="M-2 0H71a3 3 0 0 1 3 3V13a3 3 0 0 1-3 3H-2zM-2 31H71a3 3 0 0 1 3 3V45a3 3 0 0 1-3 3H-2zM-2 63H71a3 3 0 0 1 3 3V76a3 3 0 0 1-3 3H-2z" />
                </svg>
                <StatValue>5699</StatValue>
                <StatLabel>Total Message Parts</StatLabel>
              </StatCard>
              <StatCard $bg="#45b5ab">
                <MoneyIcon />
                <StatValue>₦ 10974.7</StatValue>
                <StatLabel>Total Credit Deducted</StatLabel>
              </StatCard>
            </Stats>
            <ChartCard>
              <ChartHead>
                <svg width="16" height="14" viewBox="0 0 16 14" fill="#45b5ab">
                  <path d="M0 0h1v13h15v1H0zM3 8h2v4H3zM6.500 5h2v7h-2zM10 7h2v5h-2zM13 2h2v10h-2z" />
                </svg>
                <ChartTitle>
                  SMS SUMMARY
                  <small>[ From : 2017-05-01 To : 2017-05-30 ]</small>
                </ChartTitle>
                <ChartTools>
                  <ChevronDown size={24} strokeWidth={1.2} />
                  <RefreshCw size={16} strokeWidth={1.7} />
                  <ExpandIcon width="13" height="13" viewBox="0 0 13 13" fill="none" stroke="#aeaeae" strokeWidth="1.500">
                    <path d="M2 11L11 2M7.500.8h4.700v4.700M.8 7.500v4.700h4.700" />
                  </ExpandIcon>
                </ChartTools>
              </ChartHead>
              <BarChart />
            </ChartCard>
          </Content>
        </Page>
        <Scrollbar>
          <ScrollArrow width="9" height="5" viewBox="0 0 9 5"><path d="M4.500 0L9 5H0z" fill="#a3a3a3" /></ScrollArrow>
          <ScrollThumb />
          <ScrollTrack />
          <ScrollArrow width="9" height="5" viewBox="0 0 9 5"><path d="M0 0h9L4.500 5z" fill="#505050" /></ScrollArrow>
        </Scrollbar>
      </Viewport>

      <Taskbar>
        <StartButton><Windows /></StartButton>
        <TaskList>
          {taskIcons.map((icon, i) => (
            <TaskItem key={i} $open={taskState[i] === "open"} $active={taskState[i] === "active"}>
              {icon}
            </TaskItem>
          ))}
        </TaskList>
        <Tray>
          <TrayIcon $w={30}>
            <svg width="30" height="19" viewBox="0 0 30 19"><rect x=".5" y=".5" width="29" height="18" rx="2" fill="#fff" stroke="#333" /><path d="M4 4h22M4 8h22M4 12h22M8 15.500h14M4 4v9M8 4v9M12 4v9M16 4v9M20 4v9M24 4v9" stroke="#777" fill="none" /></svg>
          </TrayIcon>
          <TrayIcon $w={34}>
            <svg width="9" height="5" viewBox="0 0 9 5"><path d="M4.500 0L9 5H0z" fill="#fff" /></svg>
          </TrayIcon>
          <TrayIcon $w={16}>
            <svg width="16" height="16" viewBox="0 0 16 16" fill="none" stroke="#fff"><path d="M1 5h3l3-3v12l-3-3H1z" fill="#fff" stroke="#333" strokeWidth=".5" /><path d="M10 5c1 2 1 4 0 6M12.500 3c2 3 2 7 0 10" /></svg>
          </TrayIcon>
          <TrayIcon $w={31}>
            <svg width="14" height="17" viewBox="0 0 14 17"><path d="M1 1v15" stroke="#fff" strokeWidth="1.500" /><path d="M2 2h6l1 1h4v6H8L7 8H2z" fill="#fff" stroke="#333" strokeWidth=".5" /></svg>
          </TrayIcon>
          <TrayIcon $w={17}>
            <svg width="15" height="17" viewBox="0 0 15 17" fill="none" stroke="#fff"><rect x=".5" y=".5" width="8" height="6" /><rect x="6.500" y="5.500" width="8" height="6" fill="#98a5b8" /><path d="M5 7v7M1 14.500h8" /></svg>
          </TrayIcon>
          <Clock>
            <div>1:58 PM</div>
            <div>5/30/2017</div>
          </Clock>
        </Tray>
      </Taskbar>
    </Screen>
  );
}
